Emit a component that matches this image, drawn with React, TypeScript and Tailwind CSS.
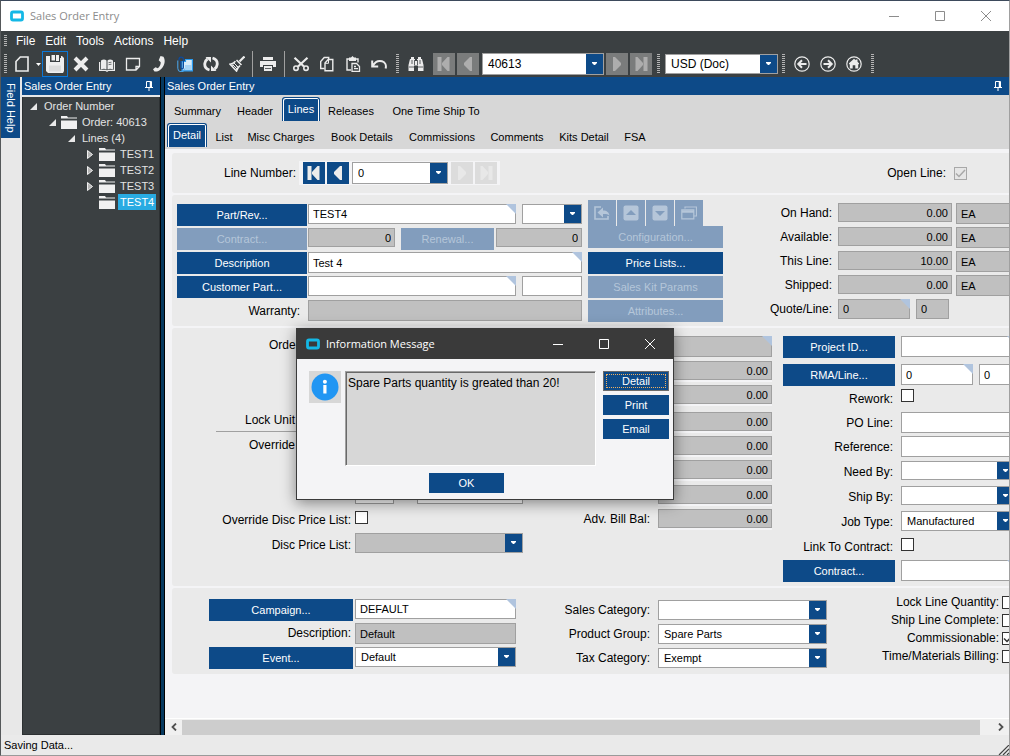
import React, { useId, useState } from 'react';
import clsx from 'clsx';

const menus = ['File', 'Edit', 'Tools', 'Actions', 'Help'];

const pageTabs = [
  { name: 'Summary', width: 'w-[61px]' },
  { name: 'Header', width: 'w-[54px]' },
  { name: 'Lines', width: 'w-[38px]' },
  { name: 'Releases', width: 'w-[62px]' },
  { name: 'One Time Ship To', width: 'w-[108px]' },
];

const lineTabs = [
  { name: 'Detail', width: 'w-[40px]' },
  { name: 'List', width: 'w-[34px]' },
  { name: 'Misc Charges', width: 'w-[80px]' },
  { name: 'Book Details', width: 'w-[82px]' },
  { name: 'Commissions', width: 'w-[78px]' },
  { name: 'Comments', width: 'w-[72px]' },
  { name: 'Kits Detail', width: 'w-[62px]' },
  { name: 'FSA', width: 'w-[40px]' },
];

const treeRows = [
  { label: 'Order Number', indent: 'pl-[1px]', state: 'open', folder: false },
  { label: 'Order: 40613', indent: 'pl-[20px]', state: 'open', folder: true },
  { label: 'Lines (4)', indent: 'pl-[39px]', state: 'open', folder: false },
  { label: 'TEST1', indent: 'pl-[58px]', state: 'closed', folder: true },
  { label: 'TEST2', indent: 'pl-[58px]', state: 'closed', folder: true },
  { label: 'TEST3', indent: 'pl-[58px]', state: 'closed', folder: true },
  { label: 'TEST4', indent: 'pl-[58px]', state: 'leaf', folder: true, selected: true },
];

const quantities = [
  { label: 'On Hand:', value: '0.00' },
  { label: 'Available:', value: '0.00' },
  { label: 'This Line:', value: '10.00' },
  { label: 'Shipped:', value: '0.00' },
];

/* ---------- icons ---------- */

function Icon({ children, size = 16 }: { children: React.ReactNode; size?: number }) {
  return (
    <svg width={size} height={size} viewBox="0 0 16 16" fill="none" stroke="currentColor" strokeWidth="1.6" aria-hidden="true">
      {children}
    </svg>
  );
}

const NewIcon = () => <Icon><path d="M6.3 1H14v14H2V5.5L6.3 1z" /></Icon>;
const SaveIcon = () => (
  <svg width="20" height="18" viewBox="0 0 20 18" aria-hidden="true">
    <path fill="#efefef" d="M1 1h4v6h10V3h1V1h1l2 2v13l-1 2H3l-2-2z" />
    <path fill="#efefef" d="M6.500 0H10v5.500H6.500zM11 0h3v6h-3z" />
    <path fill="#dcdcdc" d="M4 10.500h12v6H4z" />
  </svg>
);
const DeleteIcon = () => <Icon><path strokeWidth="4" d="M2 2l12 12M14 2L2 14" /></Icon>;
const BookIcon = () => (
  <Icon>
    <path fill="currentColor" stroke="none" d="M2 4.500C4 3 6 3 7.500 4.500v9C6 12.500 4 12.500 2 13.500zM8.500 4.500C10 3 12 3 14 4.500v9c-2-1-4-1-5.500 0z" />
    <path strokeWidth="1.200" d="M.6 6v8.400h6.200l1.200.8 1.200-.8h6.200V6" />
    <path stroke="#3b4042" strokeWidth=".7" d="M9.500 6.700l3-.5M9.500 8.700l3-.5" />
  </Icon>
);
const NoteIcon = () => <Icon><path strokeWidth="1.300" d="M1.500 2.500h13v8l-3.500 3.500H1.500zM14.500 10.500H11V14" /></Icon>;
const PhoneIcon = () => (
  <Icon><path fill="currentColor" stroke="none" d="M9.500 0l3 .8c2.600 4.500.8 10-3.500 13.300-1.800 1.300-3.700 1.700-5.500 1.400L2 13.300l2.500-2 2.300 1c2-1.600 3-3.700 2.900-6L7.700 4.200z" /></Icon>
);
const AttachIcon = () => (
  <Icon>
    <path fill="#d8ecfa" stroke="#2a9bf0" strokeWidth="1.200" d="M5 14.800V5.500h3.500v-2h6.900v11.300z" />
    <path fill="#a9d4f5" stroke="none" d="M8 9h6.500v5H8z" />
    <path stroke="#0d4a9c" strokeWidth="1.200" d="M2 4.500V3.300a2.200 2.200 0 014.400 0v8.200a1.300 1.300 0 01-2.600 0V5" />
    <path stroke="#4aa8f0" strokeWidth="1" d="M.8 4.500v7.700a3.400 3.400 0 006.800.4" />
  </Icon>
);
const RefreshIcon = () => (
  <Icon>
    <path strokeWidth="2.800" d="M6.500 14C3 13 1.500 10.500 1.800 7.500 2 5.500 3 4 4.500 3M9.500 2c3.500 1 5 3.500 4.700 6.500-.2 2-1.200 3.500-2.700 4.500" />
    <path fill="currentColor" stroke="none" d="M2.500 1H8v5.500zM13.500 15H8V9.500z" />
  </Icon>
);
const BroomIcon = () => (
  <Icon>
    <path strokeWidth="2.200" d="M15.500 .5L10.500 5.500" />
    <path strokeWidth="1.600" d="M7.500 4l5 5M6.500 5.200C5 7 3.500 7.700 1 8.200L7.500 15c.6-2.200 1.500-3.700 3.500-5.300" />
    <path strokeWidth="1" d="M3.500 8.500l4.500 4.500M5 7l4.500 4.500M3 10l2-1M5.500 12.500l2-2" />
  </Icon>
);
const PrintIcon = () => (
  <Icon>
    <path fill="currentColor" stroke="none" d="M3 1h10v3H3zM0 5h16v6h-3V9H3v2H0z" />
    <path fill="currentColor" stroke="none" d="M4 10h8v5H4z" />
    <path stroke="#3b4042" strokeWidth=".8" d="M5 12.500h6" />
  </Icon>
);
const CutIcon = () => (
  <Icon>
    <path strokeWidth="2.200" d="M1.500 1.800l9.500 8.700M14.500 1.800L5 10.500" />
    <circle cx="3" cy="12.200" r="2.200" strokeWidth="1.600" />
    <circle cx="13" cy="12.200" r="2.200" strokeWidth="1.600" />
  </Icon>
);
const CopyIcon = () => (
  <Icon>
    <path strokeWidth="1.400" d="M5.500 12.500H1.700V5.500l3.500-4h4.500V4" />
    <path strokeWidth="1.400" d="M9.200 3.500h4.600v11.300H6V7z" />
    <path strokeWidth="1" d="M9.500 4v3.300H6" />
  </Icon>
);
const PasteIcon = () => (
  <Icon>
    <path strokeWidth="1.400" d="M6 14H2V3h11v3.500" />
    <path fill="currentColor" stroke="none" d="M4 1.500h2L7.500 0 9 1.500h2V5H4z" />
    <path strokeWidth="1.300" d="M7 7.500h4.500l3 3v4.800H7zM9 10.500h2M9 12.700h4" />
  </Icon>
);
const UndoIcon = () => (
  <Icon><path strokeWidth="2" d="M1.200 4.500v6h6M1.800 9.800C4 6 7.500 4.300 11 5.300c3 .9 4.600 3.700 3.600 7.200" /></Icon>
);
const FindIcon = () => (
  <Icon>
    <path fill="currentColor" stroke="none" d="M3 1h3v2h1v2h2V3h1V1h3v2h1l1.500 6v6H10V9.500H6V15H.5V9L2 3h1z" />
    <path stroke="#3b4042" strokeWidth=".8" d="M1 11h5M10 11h5M6.500 4v5M9.500 4v5M4 4v4M12 4v4" />
  </Icon>
);
const CircleIcon = ({ kind }: { kind: 'back' | 'forward' | 'home' }) => (
  <Icon>
    <circle cx="8" cy="8" r="7.200" strokeWidth="1.200" />
    {kind === 'back' && <path strokeWidth="2" d="M12.500 8H4.500M8 4.300L4.300 8 8 11.700" />}
    {kind === 'forward' && <path strokeWidth="2" d="M3.500 8h8M8 4.300L11.700 8 8 11.700" />}
    {kind === 'home' && (
      <path fill="currentColor" stroke="none" d="M8 2.800l1.800 1.500V3.500h1.700v2.300L13 7.300v1h-.8v4.200H9.300V9.200H6.700v3.300H3.800V8.300H3v-1z" />
    )}
  </Icon>
);
const PinIcon = () => (
  <svg width="8" height="10" viewBox="0 0 8 10" fill="none" stroke="white" aria-hidden="true">
    <path d="M1.500 6V.5h5V6M0 6.500h8M4 6.500V10" />
    <path strokeWidth="1.500" d="M5.500 1v5" />
  </svg>
);
const FolderIcon = () => (
  <svg width="16" height="13" viewBox="0 0 16 13" fill="#f0f0f0" aria-hidden="true">
    <path d="M0 0h6l1 1.500h9v1H0zM0 4.500h16V13H0z" />
  </svg>
);
const LogoIcon = ({ inner }: { inner: string }) => (
  <svg width="14" height="12" viewBox="0 0 14 12" aria-hidden="true">
    <rect x="1.500" y="2" width="11" height="8" rx="1.500" fill={inner} stroke="#14b8e6" strokeWidth="2.800" />
  </svg>
);

function NavArrow({ dir, bar }: { dir: 'left' | 'right'; bar?: boolean }) {
  return (
    <svg width="16" height="16" viewBox="0 0 16 16" fill="currentColor" aria-hidden="true">
      <g transform={dir === 'right' ? 'matrix(-1 0 0 1 16 0)' : undefined}>
        {bar ? <path d="M1.500 1h4v14h-4zM13.500 1v14h-2L6 9V7l5.500-6z" /> : <path d="M12 1v14h-2L4 9V7l6-6z" />}
      </g>
    </svg>
  );
}

/* ---------- small controls ---------- */

function Grip({ className }: { className?: string }) {
  return (
    <span
      className={clsx('w-[3px] shrink-0 bg-[repeating-linear-gradient(to_bottom,#b4b4b4_0_1px,transparent_1px_2px)]', className)}
    />
  );
}

function ToolButton({ label, children, active }: { label: string; children: React.ReactNode; active?: boolean }) {
  return (
    <button
      aria-label={label}
      className={clsx(
        'flex h-[26px] w-[26px] shrink-0 items-center justify-center text-[#ececec]',
        active && 'border border-[#0b78d8]'
      )}
    >
      {children}
    </button>
  );
}

function NavButton({ label, tone, dir, bar }: { label: string; tone: 'blue' | 'gray' | 'faint'; dir: 'left' | 'right'; bar?: boolean }) {
  return (
    <button
      aria-label={label}
      className={clsx(
        'flex h-[22px] w-[22px] shrink-0 items-center justify-center',
        tone === 'blue' && 'bg-[#0d4a88] text-[#ececec]',
        tone === 'gray' && 'bg-[#7a7c7c] text-[#adadad]',
        tone === 'faint' && 'bg-[#dcdcdc] text-[#e8e8e8]'
      )}
    >
      <NavArrow dir={dir} bar={bar} />
    </button>
  );
}

function FormButton({ children, className, disabled }: { children: React.ReactNode; className?: string; disabled?: boolean }) {
  return (
    <button
      disabled={disabled}
      className={clsx(
        'h-[22px] shrink-0 text-center text-[11px]',
        disabled ? 'bg-[#829dbd] text-[#b5c6d9]' : 'bg-[#0d4a88] text-white',
        className
      )}
    >
      {children}
    </button>
  );
}

type TextBoxProps = {
  id?: string;
  label?: string;
  value?: string;
  gray?: boolean;
  right?: boolean;
  corner?: boolean;
  className?: string;
};

function TextBox({ id, label, value = '', gray, right, corner, className }: TextBoxProps) {
  return (
    <span className={clsx('relative block shrink-0', className)}>
      <input
        id={id}
        aria-label={label}
        defaultValue={value}
        readOnly={gray}
        className={clsx(
          'block h-full w-full border border-[#a0a0a0] text-[11px] outline-none',
          gray ? 'bg-[#c0c0c0]' : 'bg-white',
          right ? 'px-[3px] text-right' : 'px-1'
        )}
      />
      {corner && <span className="absolute right-0 top-0 h-[10px] w-[10px] bg-[#b0c4de] [clip-path:polygon(0_0,100%_0,100%_100%)]" />}
    </span>
  );
}

type ComboProps = { id?: string; label?: string; value?: string; gray?: boolean; className?: string; size?: string };

function Combo({ id, label, value = '', gray, className, size = 'text-[11px]' }: ComboProps) {
  return (
    <span className={clsx('relative block shrink-0', className)}>
      <select
        id={id}
        aria-label={label}
        defaultValue={value}
        className={clsx(
          'block h-full w-full appearance-none border border-[#a0a0a0] pl-[5px] outline-none',
          size,
          gray ? 'bg-[#c0c0c0]' : 'bg-white'
        )}
      >
        <option value={value}>{value}</option>
      </select>
      <span className="pointer-events-none absolute inset-y-px right-px flex w-[17px] items-center justify-center bg-[#0d4a88]">
        <svg width="7" height="4" viewBox="0 0 7 4" fill="white" aria-hidden="true">
          <path d="M1 0h5v1L4 3H3L1 1z" />
        </svg>
      </span>
    </span>
  );
}

function CheckBox({ id, checked, muted }: { id: string; checked?: boolean; muted?: boolean }) {
  return (
    <span className="relative block h-[13px] w-[13px] shrink-0">
      <input
        id={id}
        type="checkbox"
        defaultChecked={checked}
        className={clsx('peer block h-full w-full appearance-none border', muted ? 'border-[#a8a8a8] bg-[#e6e6e6]' : 'border-[#333] bg-white')}
      />
      <svg
        className={clsx('pointer-events-none absolute inset-0 hidden peer-checked:block', muted ? 'text-[#a8a8a8]' : 'text-[#333]')}
        width="13"
        height="13"
        viewBox="0 0 13 13"
        fill="none"
        stroke="currentColor"
        strokeWidth="1.500"
        aria-hidden="true"
      >
        <path d="M2 6.500l3 3 6-6.500" />
      </svg>
    </span>
  );
}

function PanelHeader({ className }: { className?: string }) {
  return (
    <div className={clsx('flex h-[18px] shrink-0 items-center justify-between bg-[#0d4a88] text-[11px] text-white', className)}>
      <span>Sales Order Entry</span>
      <PinIcon />
    </div>
  );
}

function TabRow({ tabs, initial }: { tabs: { name: string; width: string }[]; initial: string }) {
  const [active, setActive] = useState(initial);
  return (
    <div role="tablist" className="flex h-[26px] text-[11px]">
      {tabs.map((tab) => (
        <button
          key={tab.name}
          role="tab"
          aria-selected={tab.name === active}
          onClick={() => setActive(tab.name)}
          className={clsx(
            'h-6 shrink-0 whitespace-nowrap',
            tab.width,
            tab.name === active
              ? 'rounded-t-[3px] border border-b-0 border-[#0d4a88] bg-[#0d4a88] text-white shadow-[inset_1px_1px_0_#fff,inset_-1px_0_0_#fff]'
              : 'pt-1'
          )}
        >
          {tab.name}
        </button>
      ))}
    </div>
  );
}

function Section({ children, className }: { children: React.ReactNode; className?: string }) {
  return <section className={clsx('flex rounded-l-[3px] bg-[#eaeaea]', className)}>{children}</section>;
}

/* ---------- window parts ---------- */

function TitleBar() {
  return (
    <header className="flex h-[30px] shrink-0 items-center bg-white pl-[9px] font-['Open_Sans',sans-serif] text-[11px] text-[#8c8c8c]">
      <LogoIcon inner="#fff" />
      <h1 className="ml-[6px] flex-1">Sales Order Entry</h1>
      <WindowButtons className="text-[#8c8c8c]" />
    </header>
  );
}

function WindowButtons({ className }: { className?: string }) {
  return (
    <div className={clsx('flex', className)}>
      {[
        { label: 'Minimize', d: 'M0 5.500h10' },
        { label: 'Maximize', d: 'M.5 .5h9v9h-9z' },
        { label: 'Close', d: 'M0 0l10 10M10 0L0 10' },
      ].map((b) => (
        <button key={b.label} aria-label={b.label} className="flex h-[30px] w-[46px] items-center justify-center">
          <svg width="10" height="10" viewBox="0 0 10 10" fill="none" stroke="currentColor" aria-hidden="true">
            <path d={b.d} />
          </svg>
        </button>
      ))}
    </div>
  );
}

function MenuBar() {
  return (
    <nav className="flex h-5 items-center pl-[3px] text-xs text-white">
      <Grip className="mr-1 h-3" />
      {menus.map((m) => (
        <button key={m} className="px-[5px]">{m}</button>
      ))}
    </nav>
  );
}

function ToolBar() {
  return (
    <div className="flex h-[26px] items-center pl-[3px]">
      <Grip className="mr-[2px] h-5" />
      <ToolButton label="New"><NewIcon /></ToolButton>
      <button aria-label="New options" className="flex w-[7px] justify-center">
        <svg width="5" height="3" viewBox="0 0 5 3" fill="white" aria-hidden="true"><path d="M0 0h5L2.500 3z" /></svg>
      </button>
      <ToolButton label="Save" active><SaveIcon /></ToolButton>
      <ToolButton label="Delete"><DeleteIcon /></ToolButton>
      <ToolButton label="Book"><BookIcon /></ToolButton>
      <ToolButton label="Memo"><NoteIcon /></ToolButton>
      <ToolButton label="Call"><PhoneIcon /></ToolButton>
      <ToolButton label="Attachments"><AttachIcon /></ToolButton>
      <ToolButton label="Refresh"><RefreshIcon /></ToolButton>
      <ToolButton label="Clear"><BroomIcon /></ToolButton>
      <span className="mx-[2px] h-[26px] w-px shrink-0 bg-[#a0a0a0]" />
      <ToolButton label="Print"><PrintIcon /></ToolButton>
      <span className="mx-[3px] h-[26px] w-px shrink-0 bg-[#a0a0a0]" />
      <ToolButton label="Cut"><CutIcon /></ToolButton>
      <ToolButton label="Copy"><CopyIcon /></ToolButton>
      <ToolButton label="Paste"><PasteIcon /></ToolButton>
      <ToolButton label="Undo"><UndoIcon /></ToolButton>
      <Grip className="mx-1 h-5" />
      <ToolButton label="Find"><FindIcon /></ToolButton>
      <div className="ml-1 flex gap-[2px]">
        <NavButton label="First order" tone="gray" dir="left" bar />
        <NavButton label="Previous order" tone="gray" dir="left" />
        <Combo label="Order" value="40613" size="text-xs" className="ml-px h-[22px] w-[122px]" />
        <NavButton label="Next order" tone="gray" dir="right" />
        <NavButton label="Last order" tone="gray" dir="right" bar />
      </div>
      <Grip className="mx-[5px] h-5" />
      <Combo label="Currency" value="USD (Doc)" size="text-xs" className="h-5 w-[113px]" />
      <Grip className="mx-1 h-5" />
      <ToolButton label="Back"><CircleIcon kind="back" /></ToolButton>
      <ToolButton label="Forward"><CircleIcon kind="forward" /></ToolButton>
      <ToolButton label="Home"><CircleIcon kind="home" /></ToolButton>
      <Grip className="mx-1 h-5" />
    </div>
  );
}

function TreePanel() {
  return (
    <aside className="flex w-[138px] shrink-0 flex-col bg-[#e8e8e8]">
      <PanelHeader className="pl-[2px] pr-[7px]" />
      <ul className="mt-[2px] flex-1 border border-t-0 border-[#2c3032] bg-[#3b4042] pt-px text-[11px] leading-4 text-[#e4e4e4]">
        {treeRows.map((row) => (
          <li key={row.label} className={clsx('flex h-4 items-center', row.indent)}>
            <span className="flex w-[18px] shrink-0 justify-center">
              {row.state === 'open' && (
                <svg width="7" height="7" viewBox="0 0 7 7" fill="#e8e8e8" aria-hidden="true"><path d="M7 0v7H0z" /></svg>
              )}
              {row.state === 'closed' && (
                <svg width="6" height="9" viewBox="0 0 6 9" fill="#b4b4b4" stroke="#f0f0f0" aria-hidden="true"><path d="M.5 .5v8l5-4z" /></svg>
              )}
            </span>
            {row.folder && <span className="mr-[3px] shrink-0"><FolderIcon /></span>}
            <span className={clsx('whitespace-nowrap px-[2px]', row.selected && 'bg-[#29abe2] text-white')}>{row.label}</span>
          </li>
        ))}
      </ul>
    </aside>
  );
}

function LineNumberSection() {
  const id = useId();
  return (
    <Section className="h-10 items-center">
      <label htmlFor={id + 'line'} className="w-[124px] text-right">Line Number:</label>
      <div className="ml-[3px] flex bg-[#f4f4f6] py-px pl-1 pr-[3px]">
        <NavButton label="First line" tone="blue" dir="left" bar />
        <span className="w-[2px]" />
        <NavButton label="Previous line" tone="blue" dir="left" />
        <Combo id={id + 'line'} value="0" className="mx-[3px] h-[22px] w-[96px]" />
        <NavButton label="Next line" tone="faint" dir="right" />
        <span className="w-[2px]" />
        <NavButton label="Last line" tone="faint" dir="right" bar />
      </div>
      <label htmlFor={id + 'open'} className="w-[446px] text-right">Open Line:</label>
      <span className="ml-2"><CheckBox id={id + 'open'} checked muted /></span>
    </Section>
  );
}

function PartSection() {
  const id = useId();
  return (
    <Section className="h-[131px] items-start pl-[5px] pt-[5px]">
      <div className="w-[405px] shrink-0 pt-1">
        <div className="flex h-6 gap-px">
          <FormButton className="w-[130px]">Part/Rev...</FormButton>
          <TextBox label="Part" value="TEST4" corner className="h-5 w-[208px]" />
          <Combo label="Revision" className="ml-[5px] h-5 w-[60px]" />
        </div>
        <div className="flex h-6 gap-px">
          <FormButton disabled className="w-[130px]">Contract...</FormButton>
          <TextBox label="Contract number" value="0" gray right className="h-[19px] w-[87px]" />
          <FormButton disabled className="ml-[5px] w-[93px]">Renewal...</FormButton>
          <TextBox label="Renewal number" value="0" gray right className="ml-px h-[19px] w-[86px]" />
        </div>
        <div className="flex h-6 gap-px">
          <FormButton className="w-[130px]">Description</FormButton>
          <TextBox label="Part description" value="Test 4" corner className="h-[21px] w-[274px]" />
        </div>
        <div className="flex h-6 gap-px">
          <FormButton className="w-[130px]">Customer Part...</FormButton>
          <TextBox label="Customer part" corner className="h-5 w-[208px]" />
          <TextBox label="Customer revision" className="ml-[5px] h-5 w-[60px]" />
        </div>
        <div className="flex h-6 gap-px">
          <label htmlFor={id + 'war'} className="w-[130px] pr-[7px] text-right leading-[22px]">Warranty:</label>
          <TextBox id={id + 'war'} gray className="h-[21px] w-[274px]" />
        </div>
      </div>

      <div className="ml-[6px] flex w-[135px] shrink-0 flex-col gap-[2px]">
        <div className="flex flex-col pb-px">
          <div className="flex h-[26px] gap-px">
            {[
              { label: 'Return', icon: <><path d="M7 2H1v12h13v-3" /><path fill="currentColor" stroke="none" d="M3.500 7.500L9 2.500v3c4 0 6 2 6.500 5C13.500 9 11.500 8.800 9 9v3.500z" /></> },
              { label: 'Move up', icon: <><rect x=".5" y=".5" width="15" height="15" rx="2" fill="currentColor" stroke="none" /><path fill="#829dbd" stroke="none" d="M3 10h10L8 5z" /></> },
              { label: 'Move down', icon: <><rect x=".5" y=".5" width="15" height="15" rx="2" fill="currentColor" stroke="none" /><path fill="#829dbd" stroke="none" d="M3 6h10l-5 5z" /></> },
              { label: 'Windows', icon: <><path strokeWidth="1.200" d="M4 3.500V2h11.500v9H13" /><path strokeWidth="1.200" d="M.8 4.800h12v9H.8z" /><path d="M1 6.500h12" strokeWidth="2.500" /></> },
            ].map((b) => (
              <button key={b.label} aria-label={b.label} disabled className="flex w-7 items-center justify-center bg-[#829dbd] text-[#b5c6d9]">
                <Icon>{b.icon}</Icon>
              </button>
            ))}
          </div>
          <FormButton disabled>Configuration...</FormButton>
        </div>
        <FormButton className="mt-px">Price Lists...</FormButton>
        <FormButton disabled>Sales Kit Params</FormButton>
        <FormButton disabled>Attributes...</FormButton>
      </div>

      <div className="shrink-0 pt-[3px]">
        {quantities.map((q) => (
          <div key={q.label} className="flex h-6">
            <label htmlFor={id + q.label} className="mr-[6px] w-[109px] text-right leading-5">{q.label}</label>
            <TextBox id={id + q.label} value={q.value} gray right className="h-[19px] w-[114px]" />
            <TextBox label={q.label + ' unit'} value="EA" gray className="ml-1 h-[21px] w-[60px]" />
          </div>
        ))}
        <div className="flex h-6">
          <label htmlFor={id + 'quote'} className="mr-[6px] w-[109px] text-right leading-5">Quote/Line:</label>
          <TextBox id={id + 'quote'} value="0" gray corner className="h-5 w-[72px]" />
          <TextBox label="Quote line" value="0" gray className="ml-[6px] h-5 w-[33px]" />
        </div>
      </div>
    </Section>
  );
}

function PricingSection() {
  const id = useId();
  const label = 'mr-1 w-[179px] text-right leading-6';
  return (
    <Section className="h-[258px] items-start pt-[5px]">
      <div className="w-[351px] shrink-0">
        <div className="flex h-[25px]">
          <label htmlFor={id + 'qty'} className="mr-[52px] w-[131px] text-right leading-6">Order:</label>
          <TextBox id={id + 'qty'} className="h-5 w-[168px]" />
        </div>
        <div className="h-[25px]" />
        <div className="flex h-[25px]">
          <label htmlFor={id + 'unit'} className={label}>Unit Price:</label>
          <TextBox id={id + 'unit'} className="h-5 w-[168px]" />
        </div>
        <div className="ml-11 flex h-6 border-b border-[#a0a0a0]">
          <label htmlFor={id + 'lock'} className="mr-1 w-[135px] text-right leading-6">Lock Unit Price/Qty:</label>
          <CheckBox id={id + 'lock'} />
        </div>
        <div className="mt-px flex h-[25px]">
          <label htmlFor={id + 'opl'} className={label}>Override Price List:</label>
          <CheckBox id={id + 'opl'} />
        </div>
        <div className="h-[25px]" />
        <div className="flex h-[25px] pl-[183px]">
          <TextBox label="Discount percent" className="h-[21px] w-[39px]" />
          <TextBox label="Discount amount" className="ml-[23px] h-[21px] w-[106px]" />
        </div>
        <div className="flex h-[25px]">
          <label htmlFor={id + 'odpl'} className={label}>Override Disc Price List:</label>
          <span className="pt-[3px]"><CheckBox id={id + 'odpl'} /></span>
        </div>
        <div className="flex h-[25px]">
          <label htmlFor={id + 'dpl'} className={label}>Disc Price List:</label>
          <Combo id={id + 'dpl'} gray className="h-5 w-[168px]" />
        </div>
      </div>

      <div className="w-[249px] shrink-0 pl-[48px] pt-[3px]">
        <div className="flex h-[25px] justify-end">
          <TextBox label="Price code" gray corner className="h-[21px] w-[114px]" />
        </div>
        <Amount label="Ext price" />
        <Amount label="Discount" />
        <span className="block h-[3px]" />
        <Amount label="Misc charges" />
        <Amount label="Tax" />
        <Amount label="Line total" />
        <span className="block h-px" />
        <Amount label="Deposit" />
        <div className="flex h-6">
          <label htmlFor={id + 'adv'} className="mr-2 w-[79px] text-right leading-5">Adv. Bill Bal:</label>
          <TextBox id={id + 'adv'} value="0.00" gray right className="h-[19px] w-[114px] shadow-[0_2px_0_#f4f4f6]" />
        </div>
      </div>

      <ProjectColumn />
    </Section>
  );
}

function Amount({ label }: { label: string }) {
  return (
    <div className="flex h-6 justify-end">
      <TextBox label={label} value="0.00" gray right className="h-[19px] w-[114px] shadow-[0_2px_0_#f4f4f6]" />
    </div>
  );
}

function ProjectColumn() {
  const id = useId();
  const label = 'mr-2 w-[110px] text-right leading-[22px]';
  return (
    <div className="ml-[11px] w-[240px] shrink-0 pt-[3px]">
      <div className="flex h-7">
        <FormButton className="mr-[6px] w-[112px]">Project ID...</FormButton>
        <TextBox label="Project" corner className="h-[21px] w-[116px]" />
      </div>
      <div className="flex h-6">
        <FormButton className="mr-[6px] w-[112px]">RMA/Line...</FormButton>
        <TextBox label="RMA" value="0" corner className="h-[21px] w-[72px]" />
        <TextBox label="RMA line" value="0" className="ml-[6px] h-[21px] w-[38px]" />
      </div>
      <div className="flex h-6">
        <label htmlFor={id + 'rework'} className={label}>Rework:</label>
        <span className="pt-px"><CheckBox id={id + 'rework'} /></span>
      </div>
      <div className="flex h-6">
        <label htmlFor={id + 'po'} className={label}>PO Line:</label>
        <TextBox id={id + 'po'} className="h-[21px] w-[116px]" />
      </div>
      <div className="flex h-[25px]">
        <label htmlFor={id + 'ref'} className={label}>Reference:</label>
        <TextBox id={id + 'ref'} className="h-[21px] w-[116px]" />
      </div>
      <div className="flex h-[25px]">
        <label htmlFor={id + 'need'} className={label}>Need By:</label>
        <Combo id={id + 'need'} className="h-[19px] w-[114px]" />
      </div>
      <div className="flex h-[25px]">
        <label htmlFor={id + 'ship'} className={label}>Ship By:</label>
        <Combo id={id + 'ship'} className="h-[19px] w-[114px]" />
      </div>
      <div className="flex h-[25px]">
        <label htmlFor={id + 'job'} className={label}>Job Type:</label>
        <Combo id={id + 'job'} value="Manufactured" className="h-5 w-[114px]" />
      </div>
      <div className="flex h-6">
        <label htmlFor={id + 'link'} className={label}>Link To Contract:</label>
        <span className="pt-[2px]"><CheckBox id={id + 'link'} /></span>
      </div>
      <div className="flex">
        <FormButton className="mr-[6px] w-[112px]">Contract...</FormButton>
        <TextBox label="Contract" corner className="h-[21px] w-[116px]" />
      </div>
    </div>
  );
}

function CategorySection() {
  const id = useId();
  return (
    <Section className="h-[86px] items-start">
      <div className="w-[344px] shrink-0 pl-[37px] pt-[11px]">
        <div className="flex h-6 gap-[2px]">
          <FormButton className="w-[144px]">Campaign...</FormButton>
          <TextBox label="Campaign" value="DEFAULT" corner className="h-5 w-[161px]" />
        </div>
        <div className="flex h-6 gap-[2px]">
          <label htmlFor={id + 'desc'} className="w-[144px] pr-[2px] text-right leading-5">Description:</label>
          <TextBox id={id + 'desc'} value="Default" gray className="h-[21px] w-[161px]" />
        </div>
        <div className="flex h-6 gap-[2px]">
          <FormButton className="w-[144px]">Event...</FormButton>
          <Combo label="Event" value="Default" className="h-5 w-[161px]" />
        </div>
      </div>
      <div className="w-[311px] shrink-0 pt-[12px]">
        {[
          { label: 'Sales Category:', value: '' },
          { label: 'Product Group:', value: 'Spare Parts' },
          { label: 'Tax Category:', value: 'Exempt' },
        ].map((f) => (
          <div key={f.label} className="flex h-6">
            <label htmlFor={id + f.label} className="mr-2 w-[134px] text-right leading-5">{f.label}</label>
            <Combo id={id + f.label} value={f.value} className="h-5 w-[169px]" />
          </div>
        ))}
      </div>
      <div className="shrink-0 pt-[5px]">
        {['Lock Line Quantity:', 'Ship Line Complete:', 'Commissionable:', 'Time/Materials Billing:'].map((text) => (
          <div key={text} className="flex h-[18px] items-center">
            <label htmlFor={id + text} className="mr-[3px] w-[172px] text-right">{text}</label>
            <CheckBox id={id + text} checked={text === 'Commissionable:'} />
          </div>
        ))}
      </div>
    </Section>
  );
}

function ScrollBar() {
  return (
    <div className="flex h-[17px] shrink-0 items-center border-t border-white bg-[#f0f0f0] text-[#505050]">
      <button aria-label="Scroll left" className="flex w-[17px] justify-center">
        <svg width="6" height="8" viewBox="0 0 6 8" fill="none" stroke="currentColor" strokeWidth="1.800" aria-hidden="true"><path d="M5 .5L1.500 4 5 7.500" /></svg>
      </button>
      <div className="h-[15px] flex-1 pr-3">
        <div className="h-full bg-[#cdcdcd]" />
      </div>
      <button aria-label="Scroll right" className="flex w-[17px] justify-center">
        <svg width="6" height="8" viewBox="0 0 6 8" fill="none" stroke="currentColor" strokeWidth="1.800" aria-hidden="true"><path d="M1 .5L4.500 4 1 7.500" /></svg>
      </button>
    </div>
  );
}

function MessageDialog() {
  return (
    <div
      role="dialog"
      aria-label="Information Message"
      className="absolute left-[295px] top-[327px] w-[378px] border border-[#3a3a3a] bg-[#f4f4f6] shadow-[0_3px_14px_rgba(0,0,0,0.45)]"
    >
      <div className="flex h-[30px] items-center bg-[#3a3a3a] pl-[9px] font-['Open_Sans',sans-serif] text-[11px] text-white">
        <LogoIcon inner="#3a3a3a" />
        <h2 className="ml-[6px] flex-1">Information Message</h2>
        <WindowButtons />
      </div>
      <div className="flex items-start pl-3 pt-3">
        <div className="flex h-8 w-8 shrink-0 items-center justify-center bg-[#d7d7d7]">
          <svg width="28" height="28" viewBox="0 0 28 28" aria-hidden="true">
            <circle cx="14" cy="14" r="13.500" fill="#2196f3" />
            <rect x="12.300" y="12" width="3.200" height="8.500" fill="white" />
            <circle cx="13.900" cy="8.700" r="2" fill="white" />
          </svg>
        </div>
        <textarea
          readOnly
          aria-label="Message"
          defaultValue="Spare Parts quantity is greated than 20!"
          className="ml-1 h-[95px] w-[251px] shrink-0 resize-none border border-b-white border-l-[#a0a0a0] border-r-white border-t-[#a0a0a0] bg-[#d7d7d7] pl-[2px] pt-[3px] text-xs leading-4 shadow-[inset_1px_1px_0_#696969] outline-none"
        />
        <div className="ml-[7px] flex shrink-0 flex-col gap-1">
          <button className="h-5 w-[66px] border border-[#6b6b6b] bg-[#0d4a88] p-[2px] text-[11px] text-white">
            <span className="block h-full border border-dotted border-[#f0b060] leading-[13px]">Detail</span>
          </button>
          <button className="h-5 w-[66px] bg-[#0d4a88] text-[11px] text-white">Print</button>
          <button className="h-5 w-[66px] bg-[#0d4a88] text-[11px] text-white">Email</button>
        </div>
      </div>
      <button className="mb-[6px] ml-[132px] mt-[7px] block h-5 w-[75px] bg-[#0d4a88] text-[11px] text-white">OK</button>
    </div>
  );
}

export default function App() {
  return (
    <div className="relative flex h-screen w-full flex-col overflow-hidden border border-b-[#9a9a9a] border-l-[#55585a] border-r-[#a0a0a0] border-t-[#3d4a5c] bg-[#eaeaea] font-['Liberation_Sans',Arial,sans-serif] text-xs text-black">
      <TitleBar />
      <div className="shrink-0 bg-[#3b4042]">
        <MenuBar />
        <ToolBar />
      </div>

      <div className="flex min-h-0 flex-1">
        <div className="w-[21px] shrink-0 bg-[#e8e8e8]">
          <button className="flex h-[61px] w-[19px] items-center justify-center bg-[#0d4a88] text-[11px] text-white [writing-mode:vertical-rl]">
            Field Help
          </button>
        </div>
        <TreePanel />
        <div className="w-[5px] shrink-0 border-l border-r border-black bg-[#06395f]" />

        <main className="flex min-w-0 flex-1 flex-col bg-[#f4f4f6]">
          <PanelHeader className="pl-[2px] pr-[7px]" />
          <div className="h-[54px] shrink-0 bg-[#d7d7d7] pl-[2px] pt-[2px]">
            <TabRow tabs={pageTabs} initial="Lines" />
            <TabRow tabs={lineTabs} initial="Detail" />
          </div>
          {/* the form is wider than the window and runs off to the right */}
          <div className="min-h-0 flex-1 overflow-hidden pl-[7px] pt-1">
            <div className="flex min-w-[860px] flex-col gap-[2px]">
              <LineNumberSection />
              <PartSection />
              <PricingSection />
              <CategorySection />
            </div>
          </div>
          <ScrollBar />
        </main>
      </div>

      <footer className="flex h-5 shrink-0 items-center justify-between pl-[3px] text-[11px]">
        <span>Saving Data...</span>
        <svg className="self-end" width="11" height="10" viewBox="0 0 11 10" stroke="#404040" strokeWidth="1.200" aria-hidden="true">
          <path d="M1 10L11 0M5 10l6-6M9 10l2-2" />
        </svg>
      </footer>

      <MessageDialog />
    </div>
  );
}
